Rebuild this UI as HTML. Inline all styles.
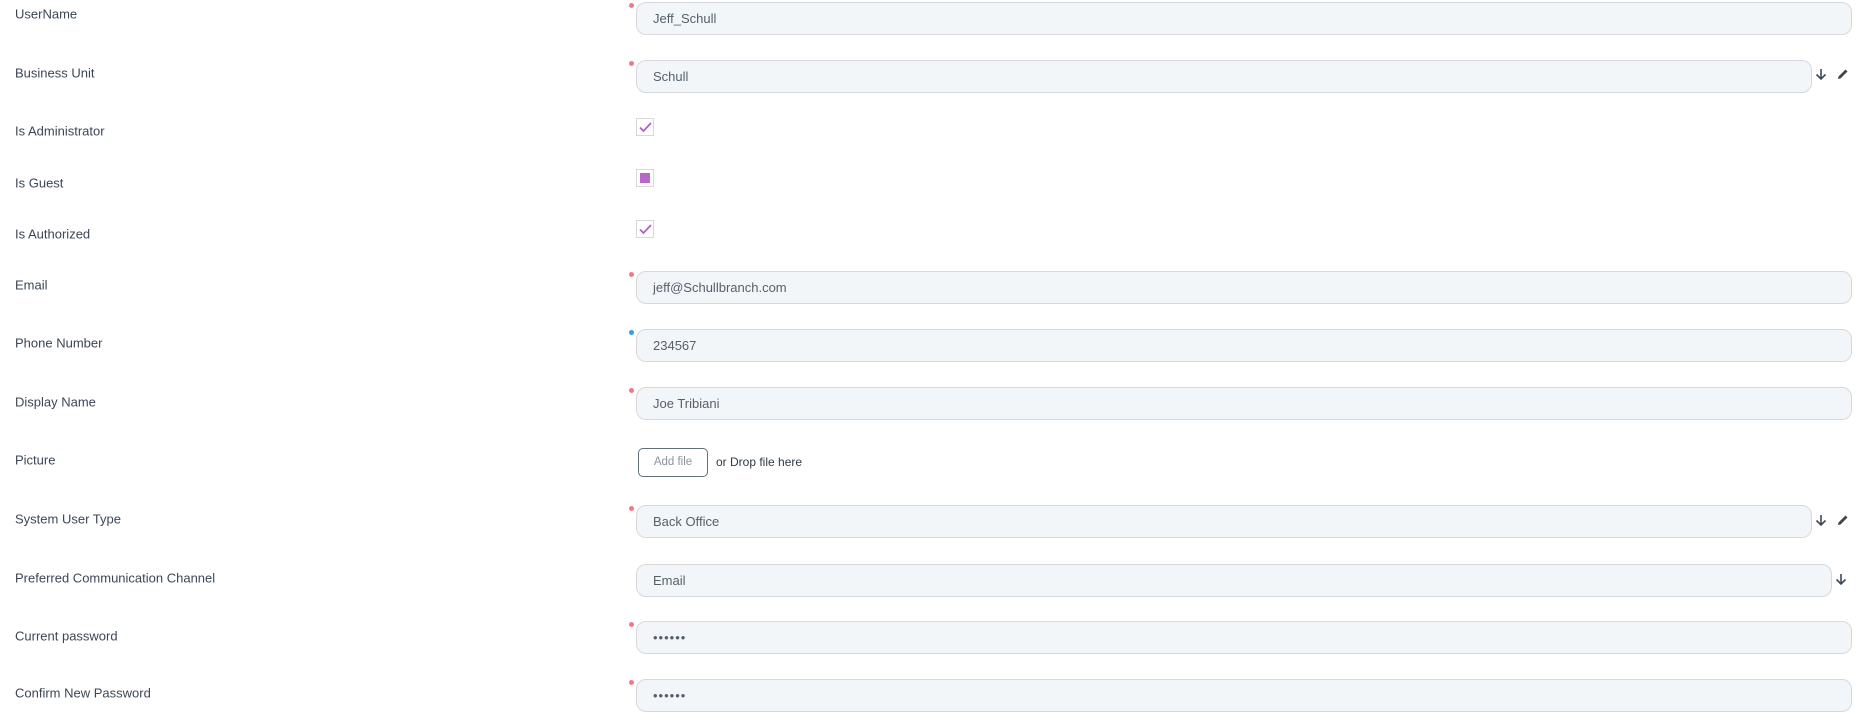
<!DOCTYPE html>
<html><head><meta charset="utf-8"><style>
body{margin:0;width:1867px;height:727px;background:#fff;position:relative;overflow:hidden;font-family:"Liberation Sans",sans-serif;}
.l{position:absolute;left:15px;font-size:13px;color:#3b4756;transform:translateY(-50%);}
.in{position:absolute;left:636px;height:33px;border:1px solid #d6d8db;border-radius:10px;background:#f3f6f9;box-sizing:border-box;font-size:13px;color:#56606b;line-height:31px;padding-left:16px;}
.d{position:absolute;left:629px;width:5px;height:5px;border-radius:50%;background:#f27887;}
.cb{position:absolute;left:636px;width:18px;height:18px;border:1px solid #d8d8d8;box-sizing:border-box;background:#fff;}
.ic{position:absolute;}
</style></head><body>
<div class="l" style="top:14px">UserName</div>
<div class="l" style="top:73px">Business Unit</div>
<div class="l" style="top:131px">Is Administrator</div>
<div class="l" style="top:183px">Is Guest</div>
<div class="l" style="top:234px">Is Authorized</div>
<div class="l" style="top:285px">Email</div>
<div class="l" style="top:343px">Phone Number</div>
<div class="l" style="top:402px">Display Name</div>
<div class="l" style="top:460px">Picture</div>
<div class="l" style="top:519px">System User Type</div>
<div class="l" style="top:578px">Preferred Communication Channel</div>
<div class="l" style="top:636px">Current password</div>
<div class="l" style="top:693px">Confirm New Password</div>

<div class="d" style="top:3px"></div><div class="in" style="top:2px;width:1216px">Jeff_Schull</div>
<div class="d" style="top:61px"></div><div class="in" style="top:60px;width:1176px">Schull</div>
<div class="cb" style="top:118px"><svg width="16" height="16" viewBox="0 0 16 16"><path d="M3 8.5L6.5 12L14 4" stroke="#b060c4" stroke-width="1.8" fill="none"/></svg></div>
<div class="cb" style="top:169px"><div style="position:absolute;left:3px;top:3px;width:10px;height:10px;background:#b866c8"></div></div>
<div class="cb" style="top:220px"><svg width="16" height="16" viewBox="0 0 16 16"><path d="M3 8.5L6.5 12L14 4" stroke="#b060c4" stroke-width="1.8" fill="none"/></svg></div>
<div class="d" style="top:272px"></div><div class="in" style="top:271px;width:1216px">jeff@Schullbranch.com</div>
<div class="d" style="top:330px;background:#2aa3df"></div><div class="in" style="top:329px;width:1216px">234567</div>
<div class="d" style="top:388px"></div><div class="in" style="top:387px;width:1216px">Joe Tribiani</div>
<div style="position:absolute;left:638px;top:448px;width:70px;height:29px;border:1px solid #5d7078;border-radius:5px;box-sizing:border-box;font-size:11.5px;color:#8a9399;text-align:center;line-height:27px">Add file</div>
<div style="position:absolute;left:716px;top:455px;font-size:12px;color:#2f3a45">or Drop file here</div>
<div class="d" style="top:506px"></div><div class="in" style="top:505px;width:1176px">Back Office</div>
<div class="in" style="top:564px;width:1196px">Email</div>
<div class="d" style="top:622px"></div><div class="in" style="top:621px;width:1216px;letter-spacing:1px">••••••</div>
<div class="d" style="top:680px"></div><div class="in" style="top:679px;width:1216px;letter-spacing:1px">••••••</div>

<svg class="ic" style="left:1815px;top:68px" width="12" height="13" viewBox="0 0 12 13"><path d="M6 1V11M1.5 6.5L6 11L10.5 6.5" stroke="#3c4a58" stroke-width="1.6" fill="none"/></svg>
<svg class="ic" style="left:1837px;top:68px" width="12" height="12" viewBox="0 0 12 12"><path d="M1 11L1.5 8.5L8.5 1.5L10.5 3.5L3.5 10.5Z" fill="#444"/></svg>
<svg class="ic" style="left:1815px;top:514px" width="12" height="13" viewBox="0 0 12 13"><path d="M6 1V11M1.5 6.5L6 11L10.5 6.5" stroke="#3c4a58" stroke-width="1.6" fill="none"/></svg>
<svg class="ic" style="left:1837px;top:514px" width="12" height="12" viewBox="0 0 12 12"><path d="M1 11L1.5 8.5L8.5 1.5L10.5 3.5L3.5 10.5Z" fill="#444"/></svg>
<svg class="ic" style="left:1835px;top:573px" width="12" height="13" viewBox="0 0 12 13"><path d="M6 1V11M1.5 6.5L6 11L10.5 6.5" stroke="#3c4a58" stroke-width="1.6" fill="none"/></svg>
</body></html>
